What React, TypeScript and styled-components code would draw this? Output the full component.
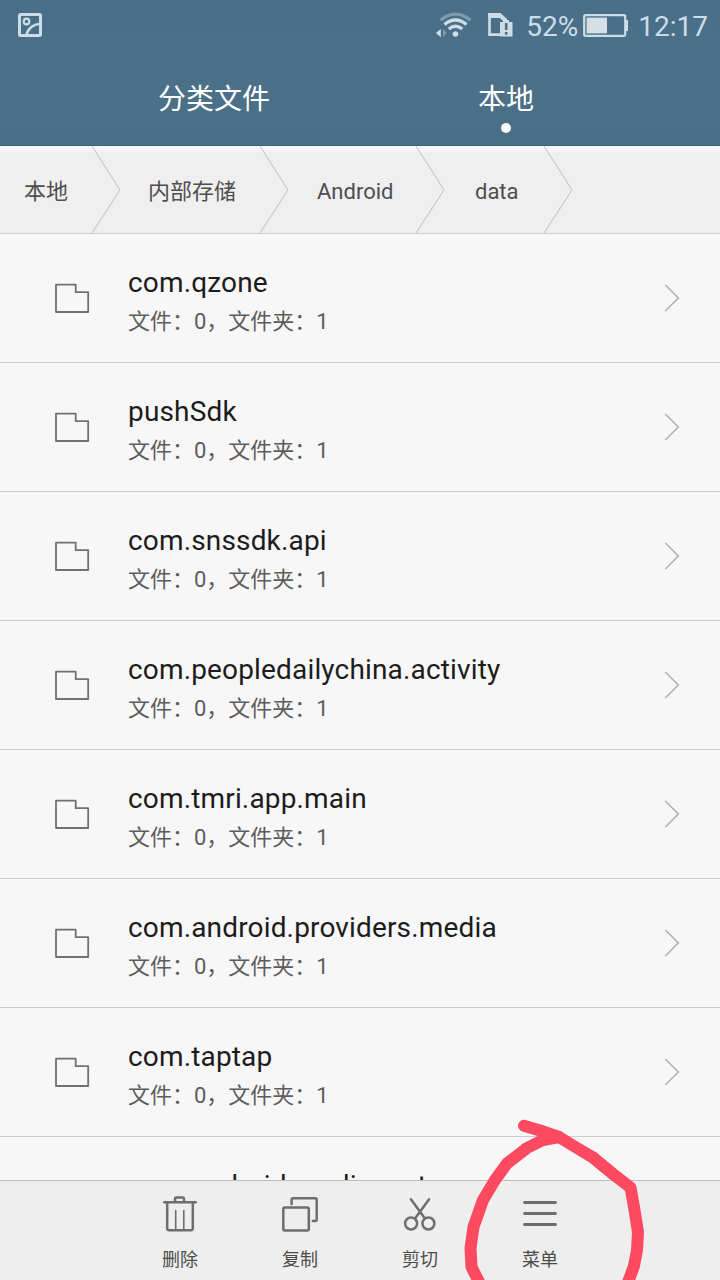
import React from 'react';
import styled, { createGlobalStyle } from 'styled-components';

const Global = createGlobalStyle`
  * { box-sizing: border-box; }
  body { margin: 0; background: #f7f7f7; }
  svg { display: block; flex: none; }
`;

const Screen = styled.div`
  position: relative;
  display: flex;
  flex-direction: column;
  width: 720px;
  height: 1280px;
  overflow: hidden;
  background: #f7f7f7;
  font-family: Roboto, 'Noto Sans CJK SC', sans-serif;
`;

const Header = styled.header`
  flex: none;
  height: 146px;
  background: linear-gradient(#496e87, #4b7088 60%, #4a6e85);
  border-bottom: 1px solid #42647b;
`;

const StatusBar = styled.div`
  display: flex;
  align-items: center;
  height: 50px;
  padding: 0 12px 0 17px;
  color: #cddde8;
  font-size: 28px;
`;

const StatusGroup = styled.div`
  display: flex;
  align-items: center;
  margin-left: auto;
`;

const StatusText = styled.span<{ $before: number }>`
  margin-left: ${p => p.$before}px;
  line-height: 50px;
  padding-top: 3px;
`;

const Battery = styled.svg`
  margin: 1px 0 0 5px;
`;

const SimIcon = styled.svg`
  margin-left: 15px;
`;

const Tabs = styled.nav`
  display: flex;
  padding: 30px 68px 0;
`;

const Tab = styled.div`
  flex: 1;
  display: flex;
  flex-direction: column;
  align-items: center;
  color: #fff;
  font-size: 28px;
  font-weight: 400;
  line-height: 40px;
`;

const Dot = styled.i`
  width: 10px;
  height: 10px;
  margin-top: 3px;
  border-radius: 50%;
  background: #fff;
`;

const Crumbs = styled.div`
  flex: none;
  display: flex;
  height: 88px;
  background: linear-gradient(#f3f6fb 0, #f7f5f3 5px, #efefef 7px);
  border-bottom: 1px solid #cfcfcf;
`;

const Crumb = styled.div<{ $width: number; $inset: number }>`
  display: flex;
  align-items: center;
  justify-content: space-between;
  width: ${p => p.$width}px;
  padding-left: ${p => p.$inset}px;
  color: #4e4e4e;
  font-size: 22px;
  line-height: 32px;

  span { padding-top: 5px; white-space: nowrap; }
`;

const List = styled.main`
  flex: 1;
  min-height: 0;
  overflow: hidden;
`;

const Row = styled.div`
  display: flex;
  align-items: center;
  height: 129px;
  padding: 0 40px 0 54px;
  border-bottom: 1px solid #cdcdcd;
`;

const RowText = styled.div`
  flex: 1;
  padding: 9px 0 0 38px;
`;

const Name = styled.div`
  color: #1c1c1c;
  font-size: 28px;
  line-height: 38px;
  letter-spacing: 0.16px;
  white-space: nowrap;
`;

const Detail = styled.div`
  padding-top: 1px;
  color: #5c5c5c;
  font-size: 22px;
  line-height: 38px;
`;

const BottomBar = styled.footer`
  flex: none;
  display: flex;
  justify-content: center;
  height: 100px;
  background: #eeeeee;
  border-top: 1px solid #bdbdbd;
`;

const Action = styled.div`
  display: flex;
  flex-direction: column;
  align-items: center;
  width: 120px;
  padding-top: 14px;
  color: #4c4c4c;
  font-size: 18px;
  line-height: 26px;

  svg { margin-bottom: 14px; }
`;

const Marker = styled.svg`
  position: absolute;
  left: 440px;
  top: 1110px;
`;

const Chevron = () => (
  <svg width="28" height="87" viewBox="0 0 28 87" fill="none" stroke="#c9c9c9" strokeWidth="1.2">
    <path d="M0 0L28 44L0 87" />
  </svg>
);

const Folder = () => (
  <svg width="36" height="30" viewBox="0 0 36 30" fill="none" stroke="#717171" strokeWidth="1.8" strokeLinejoin="round">
    <path d="M2 1.6H21.7V9.2H34.2V29H2Z" />
  </svg>
);

const Arrow = () => (
  <svg width="16" height="28" viewBox="0 0 16 28" fill="none" stroke="#b2b2b2" strokeWidth="1.6">
    <path d="M1.3 1L14.3 14L1.3 27" />
  </svg>
);

const icons: Record<string, React.ReactNode> = {
  trash: (
    <>
      <path d="M2.3 7.3H33.7" />
      <path d="M13 7V4Q13 2.6 14.4 2.6H20.6Q22 2.6 22 4V7" />
      <path d="M5.2 8V33.5Q5.2 35.3 7 35.3H29Q30.8 35.3 30.8 33.5V8" />
      <path d="M13.7 15.5V34M21.8 15.5V34" strokeWidth="1.6" />
    </>
  ),
  copy: (
    <>
      <rect x="1.3" y="12.5" width="25.5" height="23" rx="1.5" />
      <path d="M9.6 9V4.7Q9.6 3.2 11.1 3.2H33.2Q34.7 3.2 34.7 4.7V24.6Q34.7 26.1 33.2 26.1H30.8" />
    </>
  ),
  cut: (
    <>
      <path d="M8.9 4.3L23 23.5M27.1 4.3L13 23.5" />
      <circle cx="9.1" cy="28.5" r="6" />
      <circle cx="26.4" cy="28.5" r="6" />
    </>
  ),
  menu: <path d="M2.5 7.5H33.5M2.5 18.5H33.5M2.5 29.5H33.5" strokeWidth="2.8" />,
};

const rows = [
  'com.qzone',
  'pushSdk',
  'com.snssdk.api',
  'com.peopledailychina.activity',
  'com.tmri.app.main',
  'com.android.providers.media',
  'com.taptap',
  'com.android.mediacenter',
];

const crumbs = [
  { label: '本地', width: 120, inset: 24 },
  { label: '内部存储', width: 168, inset: 28 },
  { label: 'Android', width: 156, inset: 29 },
  { label: 'data', width: 128, inset: 31 },
];

const actions = [
  { label: '删除', icon: 'trash' },
  { label: '复制', icon: 'copy' },
  { label: '剪切', icon: 'cut' },
  { label: '菜单', icon: 'menu' },
];

export default function App() {
  return (
    <Screen>
      <Global />
      <Header>
        <StatusBar>
          <svg width="26" height="26" viewBox="0 0 26 26" fill="none" stroke="#cddde8" strokeWidth="3">
            <rect x="2.5" y="2.5" width="21" height="21" rx="1" />
            <circle cx="9.5" cy="9.5" r="2.8" strokeWidth="2.2" />
            <path d="M9.3 23C11 17 16 12.5 23 11.8" strokeWidth="2.6" />
          </svg>
          <StatusGroup>
            <svg width="38" height="26" viewBox="0 0 38 26" fill="none" stroke="#cddde8" strokeWidth="3.2">
              <path d="M5.5 8.2Q20.5 -3.8 35.5 8.2" stroke="#7d9bae" />
              <path d="M9.5 12.5Q20.5 3.5 31.5 12.5" />
              <path d="M13.8 17Q20.5 11.5 27.2 17" />
              <circle cx="20.5" cy="22" r="2.8" fill="#cddde8" stroke="none" />
              <path d="M5.8 17V25.2L.8 21.1Z" fill="#cddde8" stroke="none" />
              <path d="M8 17V25.2L11.5 21.1Z" fill="#7d9bae" stroke="none" />
            </svg>
            <SimIcon width="26" height="26" viewBox="0 0 26 26">
              <path d="M1.5 5V22.6H13" fill="none" stroke="#cddde8" strokeWidth="2.6" />
              <path d="M0 1H12.5L19 7V10H16L12 6H0Z" fill="#cddde8" />
              <path d="M13 10H15V8H21V10H24.5V24.5H12V10Z" fill="#cddde8" />
              <path d="M18.2 11V18M18.2 20V22.7" stroke="#4a6f87" strokeWidth="2.6" />
            </SimIcon>
            <StatusText $before={12}>52%</StatusText>
            <Battery width="46" height="24" viewBox="0 0 46 24" fill="none">
              <rect x="1.2" y="1.2" width="41" height="20.6" rx="1.5" stroke="#cddde8" strokeWidth="2.2" />
              <rect x="3.6" y="3.6" width="20.4" height="15.8" fill="#d4dfe6" />
              <path d="M43 6H45V17H43Z" fill="#cddde8" />
            </Battery>
            <StatusText $before={9}>12:17</StatusText>
          </StatusGroup>
        </StatusBar>
        <Tabs>
          <Tab>分类文件</Tab>
          <Tab>
            本地
            <Dot />
          </Tab>
        </Tabs>
      </Header>
      <Crumbs>
        {crumbs.map(c => (
          <Crumb key={c.label} $width={c.width} $inset={c.inset}>
            <span>{c.label}</span>
            <Chevron />
          </Crumb>
        ))}
      </Crumbs>
      <List>
        {rows.map(name => (
          <Row key={name}>
            <Folder />
            <RowText>
              <Name>{name}</Name>
              <Detail>文件：0，文件夹：1</Detail>
            </RowText>
            <Arrow />
          </Row>
        ))}
      </List>
      <BottomBar>
        {actions.map(a => (
          <Action key={a.icon}>
            <svg width="36" height="38" viewBox="0 0 36 38" fill="none" stroke="#6e6e6e" strokeWidth="2.5" strokeLinecap="round">
              {icons[a.icon]}
            </svg>
            {a.label}
          </Action>
        ))}
      </BottomBar>
      <Marker width="240" height="170" viewBox="0 0 240 170" fill="none" stroke="#fd4a60" strokeWidth="12" strokeLinecap="round" strokeLinejoin="round">
        <path d="M84 15.7L100 20.5L119 27L137 38L153 47.5L173 64L190.5 77.5L194 97L198 122L197 140L194 156L187 175" />
        <path d="M119 27L103 30L87 38L67 53.5L55 70L43 90L33.5 117L30.5 138L31.5 157L40 174" />
      </Marker>
    </Screen>
  );
}
